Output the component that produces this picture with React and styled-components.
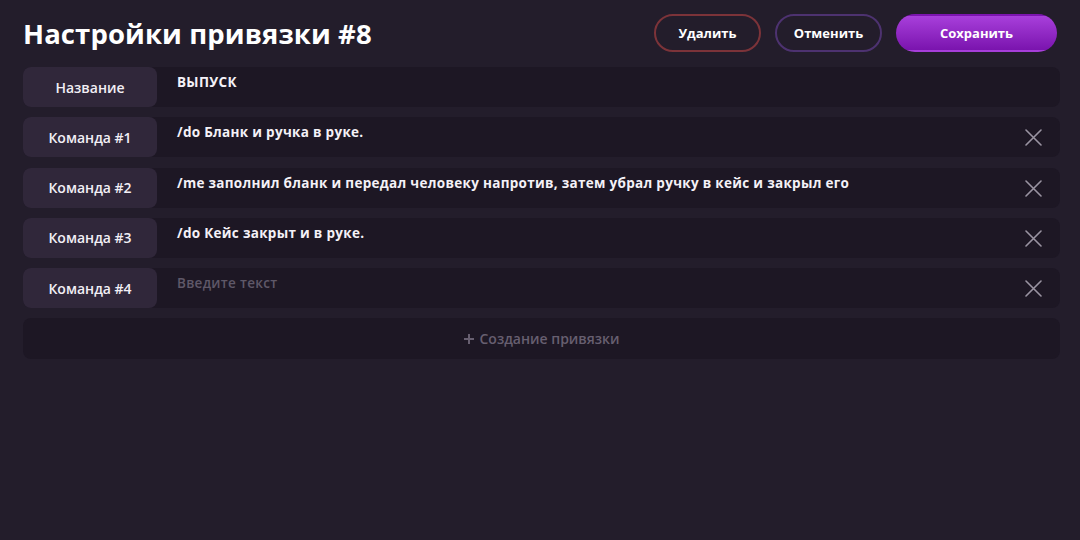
import React from "react";
import styled, { createGlobalStyle } from "styled-components";

const Global = createGlobalStyle`
  html, body { margin: 0; padding: 0; background: #231d2b; }
  body { font-family: "Open Sans", "Noto Sans", sans-serif; color: #fff; }
  * { box-sizing: border-box; }
`;

const Page = styled.div`
  width: 1080px;
  height: 540px;
  background: #231d2b;
  padding: 14px 20px 0 23px;
`;

const Header = styled.div`
  display: flex;
  align-items: center;
  justify-content: space-between;
  height: 38px;
  padding-right: 3px;
`;

const Title = styled.h1`
  margin: 0;
  font-size: 27.5px;
  font-weight: 700;
  letter-spacing: 0.1px;
  color: #fff;
`;

const Actions = styled.div`
  display: flex;
  gap: 14px;
`;

const Btn = styled.button`
  height: 38px;
  width: ${(p) => p.$w}px;
  border-radius: 19px;
  font-family: inherit;
  font-size: 13px;
  font-weight: 700;
  color: #fff;
  cursor: pointer;
  border: 2px solid ${(p) => p.$border || "transparent"};
  background: ${(p) => p.$bg || "transparent"};
`;

const List = styled.div`
  display: flex;
  flex-direction: column;
  gap: 10.25px;
  margin-top: 15px;
`;

const Row = styled.div`
  display: flex;
  height: 40px;
  background: #1d1724;
  border-radius: 8px;
`;

const Label = styled.div`
  flex: 0 0 134px;
  background: #30273a;
  border-radius: 8px;
  display: flex;
  align-items: center;
  justify-content: center;
  font-size: 14px;
  font-weight: 600;
  color: #f2eff5;
`;

const Value = styled.div`
  flex: 1;
  padding: 6px 0 0 20px;
  font-size: 13.5px;
  line-height: 19px;
  letter-spacing: 0.3px;
  color: ${(p) => (p.$placeholder ? "#5f5868" : "#f4f1f7")};
  font-weight: ${(p) => (p.$placeholder ? 600 : 700)};
`;

const Close = styled.button`
  flex: 0 0 auto;
  width: 17px;
  height: 17px;
  margin: 12px 18px 0 0;
  padding: 0;
  border: 0;
  background: none;
  cursor: pointer;
  display: flex;
`;

const CreateRow = styled.button`
  height: 41px;
  border: 0;
  border-radius: 8px;
  background: #1d1724;
  display: flex;
  align-items: center;
  justify-content: center;
  gap: 4px;
  font-family: inherit;
  font-size: 14px;
  font-weight: 600;
  color: #675f70;
  cursor: pointer;
`;

const XIcon = () => (
  <svg width="17" height="17" viewBox="0 0 17 17">
    <path d="M1 1 L16 16 M16 1 L1 16" stroke="#9a94a2" strokeWidth="1.6" strokeLinecap="round" />
  </svg>
);

const PlusIcon = () => (
  <svg width="12" height="12" viewBox="0 0 12 12">
    <path d="M6 1 V11 M1 6 H11" stroke="#675f70" strokeWidth="2" />
  </svg>
);

const commands = [
  "/do Бланк и ручка в руке.",
  "/me заполнил бланк и передал человеку напротив, затем убрал ручку в кейс и закрыл его",
  "/do Кейс закрыт и в руке.",
  "",
];

export default function App() {
  return (
    <Page>
      <Global />
      <Header>
        <Title>Настройки привязки #8</Title>
        <Actions>
          <Btn $w={107} $border="#7c3339">Удалить</Btn>
          <Btn $w={107} $border="#4d3270">Отменить</Btn>
          <Btn $w={161} $bg="linear-gradient(180deg, #a83fdb 0%, #7a14ae 100%)">Сохранить</Btn>
        </Actions>
      </Header>
      <List>
        <Row>
          <Label>Название</Label>
          <Value>ВЫПУСК</Value>
        </Row>
        {commands.map((c, i) => (
          <Row key={i}>
            <Label>Команда #{i + 1}</Label>
            <Value $placeholder={!c}>{c || "Введите текст"}</Value>
            <Close><XIcon /></Close>
          </Row>
        ))}
        <CreateRow>
          <PlusIcon />
          Создание привязки
        </CreateRow>
      </List>
    </Page>
  );
}
